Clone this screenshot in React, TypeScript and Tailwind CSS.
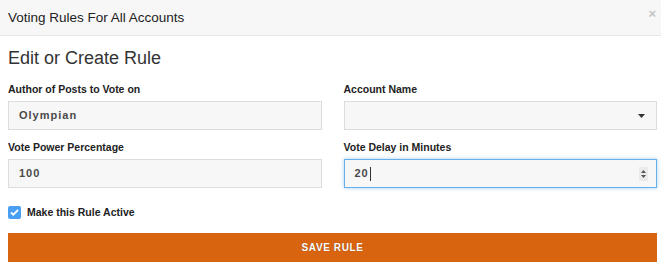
export default function App() {
  return (
    <div className="h-[264px] w-[661px] overflow-hidden bg-white font-['Liberation_Sans',Arial,sans-serif] text-[#333]">
      {/* Modal header */}
      <div className="flex h-[36px] items-center justify-between border-b border-[#e5e5e5] bg-[#f7f7f7] pl-[8px] pr-[5px]">
        <span className="text-[13.5px] leading-none text-[#222]">Voting Rules For All Accounts</span>
        <span className="-mt-[8px] text-[13px] font-bold leading-none text-[#c4c4c4]">×</span>
      </div>

      <div className="pl-[8px] pr-[4px]">
        <h2 className="mt-[10px] text-[18px] leading-[24px] text-[#333]">Edit or Create Rule</h2>

        <div className="mt-[13px] grid grid-cols-2 gap-x-[22px]">
          <div>
            <label className="block text-[10.5px] font-bold leading-[13px] text-[#222]">Author of Posts to Vote on</label>
            <div className="mt-[5px] flex h-[29px] items-center border border-[#dcdcdc] bg-[#f7f7f7] px-[10px]">
              <span className="text-[11px] font-bold tracking-[1px] text-[#4a4a4a]">Olympian</span>
            </div>
          </div>
          <div>
            <label className="block text-[10.5px] font-bold leading-[13px] text-[#222]">Account Name</label>
            <div className="mt-[5px] flex h-[29px] items-center justify-end border border-[#dcdcdc] bg-[#f7f7f7] pr-[11px]">
              <svg width="7" height="4" viewBox="0 0 7 4">
                <path d="M0 0h7L3.5 4z" fill="#333" />
              </svg>
            </div>
          </div>

          <div className="mt-[11px]">
            <label className="block text-[10.5px] font-bold leading-[13px] text-[#222]">Vote Power Percentage</label>
            <div className="mt-[5px] flex h-[29px] items-center border border-[#dcdcdc] bg-[#f7f7f7] px-[10px]">
              <span className="text-[11px] font-bold tracking-[1px] text-[#4a4a4a]">100</span>
            </div>
          </div>
          <div className="mt-[11px]">
            <label className="block text-[10.5px] font-bold leading-[13px] text-[#222]">Vote Delay in Minutes</label>
            <div className="mt-[5px] flex h-[29px] items-center justify-between border border-[#66afe9] bg-[#f7f7f7] pl-[10px] pr-[8px] shadow-[0_0_4px_rgba(102,175,233,0.6)]">
              <span className="flex items-center text-[11px] font-bold tracking-[1px] text-[#4a4a4a]">
                20<span className="ml-[1px] inline-block h-[14px] w-[1px] bg-[#333]" />
              </span>
              <span className="flex h-[14px] w-[9px] flex-col items-center justify-center gap-[2px] bg-[#eaeaea]">
                <svg width="5" height="3" viewBox="0 0 5 3">
                  <path d="M0 3h5L2.5 0z" fill="#555" />
                </svg>
                <svg width="5" height="3" viewBox="0 0 5 3">
                  <path d="M0 0h5L2.5 3z" fill="#555" />
                </svg>
              </span>
            </div>
          </div>
        </div>

        <div className="mt-[17px] flex items-center gap-[6px]">
          <span className="flex h-[13px] w-[13px] items-center justify-center rounded-[2px] bg-[#4a9ff5]">
            <svg width="9" height="7" viewBox="0 0 9 7">
              <path d="M1 3.5l2.3 2.2L8 1" stroke="#fff" strokeWidth="1.8" fill="none" />
            </svg>
          </span>
          <span className="text-[10.5px] font-bold text-[#222]">Make this Rule Active</span>
        </div>

        <button className="mt-[12px] flex h-[29px] w-full items-center justify-center bg-[#d9640f] text-[10px] font-bold tracking-[0.6px] text-white [text-shadow:0_0_1px_rgba(0,0,0,0.4)]">
          SAVE RULE
        </button>
      </div>
    </div>
  );
}
